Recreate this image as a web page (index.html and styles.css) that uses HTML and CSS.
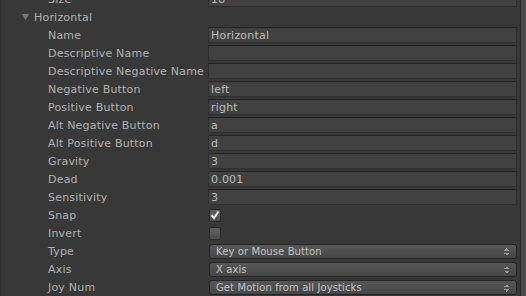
FILE: index.html
```html
<!DOCTYPE html>
<html lang="en">
<head>
  <meta charset="UTF-8">
  <title>Input Manager</title>
  <link rel="stylesheet" href="styles.css">
</head>
<body>

<div class="inspector">
  <div class="list">
    <div class="row">
      <div class="label">Size</div>
      <div class="field">18</div>
    </div>
    <div class="row foldout">
      <svg class="arrow" width="7" height="6" viewBox="0 0 7 6"><path d="M0 0 H7 L3.5 6 Z" fill="#7a7a7a"/></svg>
      <span>Horizontal</span>
    </div>
    <div class="row">
      <div class="label">Name</div>
      <div class="field">Horizontal</div>
    </div>
    <div class="row">
      <div class="label">Descriptive Name</div>
      <div class="field"></div>
    </div>
    <div class="row">
      <div class="label">Descriptive Negative Name</div>
      <div class="field"></div>
    </div>
    <div class="row">
      <div class="label">Negative Button</div>
      <div class="field">left</div>
    </div>
    <div class="row">
      <div class="label">Positive Button</div>
      <div class="field">right</div>
    </div>
    <div class="row">
      <div class="label">Alt Negative Button</div>
      <div class="field">a</div>
    </div>
    <div class="row">
      <div class="label">Alt Positive Button</div>
      <div class="field">d</div>
    </div>
    <div class="row">
      <div class="label">Gravity</div>
      <div class="field">3</div>
    </div>
    <div class="row">
      <div class="label">Dead</div>
      <div class="field">0.001</div>
    </div>
    <div class="row">
      <div class="label">Sensitivity</div>
      <div class="field">3</div>
    </div>
    <div class="row">
      <div class="label">Snap</div>
      <div class="checkbox">
        <svg width="10" height="10" viewBox="0 0 10 10"><path d="M1.5 5 L4 8 L8.5 1.5" stroke="#f2f2f2" stroke-width="2" fill="none"/></svg>
      </div>
    </div>
    <div class="row">
      <div class="label">Invert</div>
      <div class="checkbox"></div>
    </div>
    <div class="row">
      <div class="label">Type</div>
      <div class="popup">Key or Mouse Button<span class="updown"></span></div>
    </div>
    <div class="row">
      <div class="label">Axis</div>
      <div class="popup">X axis<span class="updown"></span></div>
    </div>
    <div class="row">
      <div class="label">Joy Num</div>
      <div class="popup">Get Motion from all Joysticks<span class="updown"></span></div>
    </div>
  </div>
  <div class="scrollbar"></div>
</div>

</body>
</html>
```

FILE: styles.css
```css
html, body {
  margin: 0;
  height: 100%;
  overflow: hidden;
  background-color: #383838;
}
body {
  font-family: "DejaVu Sans", Verdana, sans-serif;
  font-size: 11px;
  letter-spacing: 0.2px;
  color: #b2b2b2;
}
.inspector {
  display: flex;
  height: 100%;
  border-left: 1px solid #303030;
}
.list {
  flex: 1;
  padding-right: 3px;
  margin-top: -10px;
}
.row {
  display: flex;
  align-items: center;
  height: 18px;
}
.row > .label,
.foldout span {
  padding-top: 1px;
}
.label {
  width: 160px;
  padding-left: 47px;
  white-space: nowrap;
  flex-shrink: 0;
}
.foldout {
  padding-left: 21px;
  gap: 5px;
}
.field {
  flex: 1;
  height: 16px;
  box-sizing: border-box;
  background-color: #414141;
  border: 1px solid #2f2f2f;
  border-top-color: #232323;
  padding: 1px 0 0 2px;
  line-height: 14px;
  color: #bdbdbd;
}
.checkbox {
  width: 12px;
  height: 13px;
  margin-left: 1px;
  box-sizing: border-box;
  border: 1px solid #2a2a2a;
  border-radius: 2px;
  background: linear-gradient(#606060, #4c4c4c);
  display: flex;
  align-items: center;
  justify-content: center;
}
.popup {
  flex: 1;
  position: relative;
  height: 15px;
  margin-left: 1px;
  box-sizing: border-box;
  border: 1px solid #252525;
  border-radius: 3px;
  background: linear-gradient(#575757, #464646);
  padding: 1px 0 0 6px;
  line-height: 12px;
  font-size: 10px;
  letter-spacing: 0.1px;
  color: #c4c4c4;
}
.updown {
  position: absolute;
  right: 7px;
  top: 3px;
  width: 5px;
  height: 8px;
  background:
    linear-gradient(to bottom right, transparent 50%, #9a9a9a 50%) left top / 3px 3px no-repeat,
    linear-gradient(to bottom left, transparent 50%, #9a9a9a 50%) right top / 2px 3px no-repeat;
}
.updown::after {
  content: "";
  position: absolute;
  left: 0;
  bottom: 0;
  width: 5px;
  height: 3px;
  background:
    linear-gradient(to top right, transparent 50%, #9a9a9a 50%) left bottom / 3px 3px no-repeat,
    linear-gradient(to top left, transparent 50%, #9a9a9a 50%) right bottom / 2px 3px no-repeat;
}
.scrollbar {
  width: 5px;
  border-left: 1px solid #262626;
  background-color: #4a4a4a;
}
```
